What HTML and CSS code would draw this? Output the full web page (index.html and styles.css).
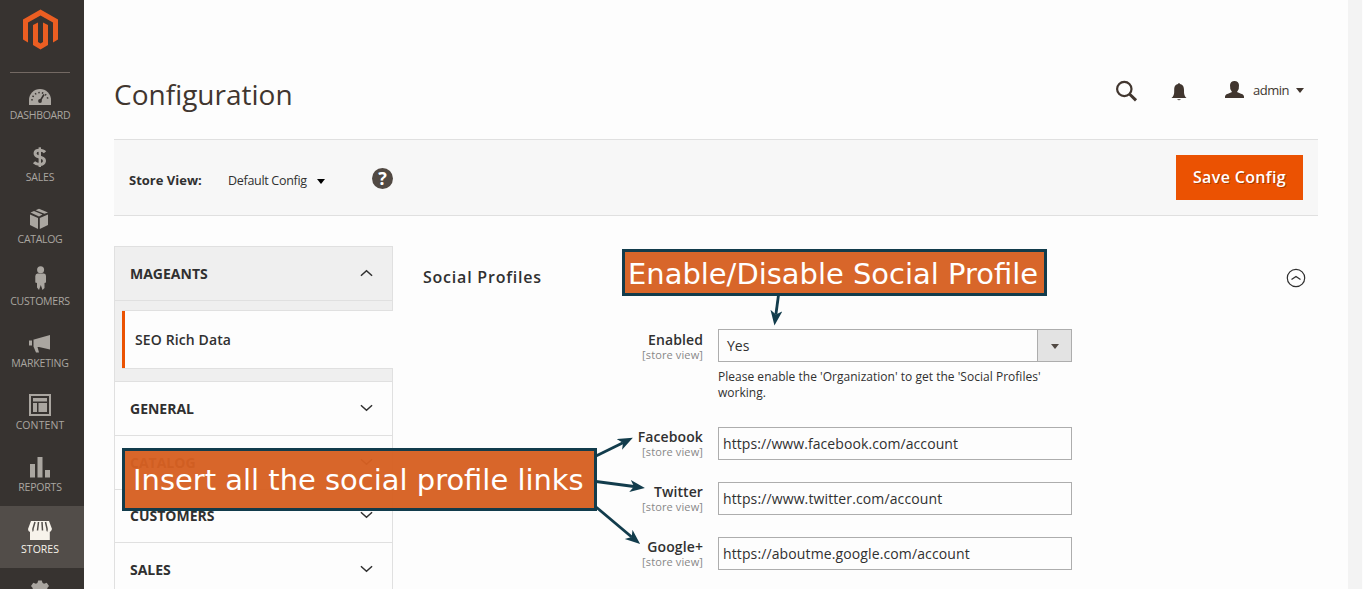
FILE: index.html
```html
<!DOCTYPE html>
<html lang="en">
<head>
<meta charset="utf-8">
<title>Configuration</title>
<link rel="stylesheet" href="styles.css">
</head>
<body>
<div class="app">
  <nav class="menu">
    <div class="logo">
      <svg width="84" height="72" viewBox="0 0 84 72" fill="#eb5e22"><path d="M40.5 9.500 58 19.500V39.500L53 42.500V22.500L40.500 15.500 28 22.500V42.500L23 39.500V19.500Z"/><path d="M33 25 38 22.500V42L40.500 43.500 43 42V22.500L48 25V45L40.500 49.500 33 45Z"/></svg>
    </div>
    <a class="item first"><svg width="84" height="36" viewBox="0 0 84 36"><path d="M29 33V28a11 11 0 0 1 22 0v5Z"/><g fill="none" stroke="#373330"><path stroke-width="1.600" stroke-dasharray="1.400 2.200" d="M32 28.500a8 8 0 0 1 16 0"/><path stroke-width="1.600" d="m40 29 4-6.500"/></g><circle cx="40" cy="29" r="1.900" fill="#373330"/></svg><span class="l-dash">DASHBOARD</span></a>
    <a class="item"><svg width="84" height="36" viewBox="0 0 84 36"><path fill="none" stroke="#aaa6a0" stroke-width="3" d="M45 18.300C43.500 16.500 41.500 16.300 39.500 16.300 33.500 16.300 34 21.700 38.500 22.700L41 23.400C46.500 25 45 30.500 40 30.500 37.500 30.500 35.500 29.800 34 28.200"/><path fill="none" stroke="#aaa6a0" stroke-width="2.400" d="M39.800 13.300V33"/></svg><span class="l-sales">SALES</span></a>
    <a class="item"><svg width="84" height="36" viewBox="0 0 84 36"><path d="M30 18.500 38 22V33L30 29ZM48 18.500 39.800 22V33L48 29ZM30.500 16.500 34 15 42.500 18.500 39 20.500ZM35.500 14.300 39 12.800 48 16.500 44.500 17.800Z"/></svg><span class="l-cat">CATALOG</span></a>
    <a class="item"><svg width="84" height="36" viewBox="0 0 84 36"><circle cx="40.600" cy="11.700" r="3.500"/><path d="M37.500 15.500H44Q46 15.500 46 18V24.500L44.500 25V30L42.500 32 40.800 27 39 32 37 29.500V25L35.300 24.500V18Q35.500 15.500 37.500 15.500Z"/></svg><span class="l-cust">CUSTOMERS</span></a>
    <a class="item"><svg width="84" height="36" viewBox="0 0 84 36"><path d="M34 19.500 50 15V29.500L39 27 37.500 27 39 32.500H36L33.500 26.500V19.500ZM29 20.500h3v5h-3Z"/></svg><span class="l-mark">MARKETING</span></a>
    <a class="item"><svg width="84" height="36" viewBox="0 0 84 36"><path fill-rule="evenodd" d="M29 12H51V34H29ZM31 14V32H49V14ZM33 16H47V19.500H33ZM33 21H37V30H33ZM38.500 21H47V30H38.500Z"/></svg><span class="l-cont">CONTENT</span></a>
    <a class="item"><svg width="84" height="36" viewBox="0 0 84 36"><path d="M30 20h5v13.500h-5ZM37.500 13h5v20.500h-5ZM45 26h5v7.500h-5Z"/></svg><span class="l-rep">REPORTS</span></a>
    <a class="item active"><svg width="84" height="36" viewBox="0 0 84 36"><path d="M31 15H49L52 23Q51 26 49.800 26V34H30V26Q28 25.500 28 23Z"/><path fill="none" stroke="#524d49" stroke-width="1.500" d="M35 16 33 22.500Q33 25 32.500 25M38.500 16 37.500 24.500M42 16 42.500 24.500M45.500 16 47 22.500Q47 25 47.500 25"/></svg><span class="l-store">STORES</span></a>
    <a class="item"><svg width="84" height="36" viewBox="0 0 84 36"><path fill-rule="evenodd" d="M38.200 12.500h3.600l.8 2.500 1.500.7 2.600-.9 2.300 3.200-1.700 2v8H32.700v-8l-1.700-2 2.300-3.200 2.600.9 1.500-.7ZM36 21.500h8v3h-8Z"/></svg></a>
  </nav>
  <main class="page">
    <header class="top">
      <h1>Configuration</h1>
      <div class="tools">
        <svg class="t-icon" width="153" height="40" viewBox="0 0 153 40" fill="#41362f"><circle cx="24.300" cy="19" r="7.200" fill="none" stroke="#41362f" stroke-width="2.200"/><path stroke="#41362f" stroke-width="3" d="m29.500 24 6.500 6.300"/><path d="M71.500 28Q74.500 26 74.200 20C74.200 15.500 76 14.500 78 14Q79 12.200 80 14C82 14.500 84 15.500 84 20Q83.700 26 86.500 28ZM77 29.200h4Q79 31.200 77 29.200ZM125 28Q124.500 24.500 128 23.700L132 22Q129.500 19 130 15 130.500 11 134.500 11T139 15Q139.500 19 137 22L141 23.700Q144.500 24.500 144 28Z"/></svg>
        <span class="user">admin</span>
        <i class="caret brown"></i>
      </div>
    </header>
    <section class="toolbar">
      <b class="sv">Store View:</b><span class="scope">Default Config</span><i class="caret"></i>
      <span class="help">?</span>
      <button class="save">Save Config</button>
    </section>
    <div class="columns">
      <aside class="tabs">
        <div class="tab open"><span class="n-mage">MAGEANTS</span><svg width="14" height="8" viewBox="0 0 14 8"><path d="m1 7 6-5.500L13 7"/></svg></div>
        <div class="sub"><div class="sub-item"><span>SEO Rich Data</span></div></div>
        <div class="tab"><span class="n-gen">GENERAL</span><svg width="14" height="8" viewBox="0 0 14 8"><path d="m1 1 6 5.500L13 1"/></svg></div>
        <div class="tab"><span class="n-cat">CATALOG</span><svg width="14" height="8" viewBox="0 0 14 8"><path d="m1 1 6 5.500L13 1"/></svg></div>
        <div class="tab short"><span class="n-cust">CUSTOMERS</span><svg width="14" height="8" viewBox="0 0 14 8"><path d="m1 1 6 5.500L13 1"/></svg></div>
        <div class="tab"><span class="n-sal">SALES</span><svg width="14" height="8" viewBox="0 0 14 8"><path d="m1 1 6 5.500L13 1"/></svg></div>
      </aside>
      <section class="form">
        <div class="form-head"><h2>Social Profiles</h2><svg width="20" height="20" viewBox="0 0 20 20" fill="none" stroke="#303030"><circle cx="10" cy="10" r="8.700" stroke-width="1.200"/><path stroke-width="1.400" d="m5.500 11.500 4.500-3 4.500 3"/></svg></div>
        <div class="field sel">
          <div class="label"><b class="f-en">Enabled</b><small>[store view]</small></div>
          <div class="control"><div class="select"><span>Yes</span><div class="drop"><i class="caret olive"></i></div></div>
          <p class="note">Please enable the 'Organization' to get the 'Social Profiles'<br>working.</p></div>
        </div>
        <div class="field"><div class="label"><b class="f-fb">Facebook</b><small>[store view]</small></div><div class="input"><span class="u-fb">https://www.facebook.com/account</span></div></div>
        <div class="field"><div class="label"><b class="f-tw">Twitter</b><small>[store view]</small></div><div class="input"><span class="u-tw">https://www.twitter.com/account</span></div></div>
        <div class="field"><div class="label"><b class="f-go">Google+</b><small>[store view]</small></div><div class="input"><span class="u-go">https://aboutme.google.com/account</span></div></div>
      </section>
    </div>
  </main>
  <div class="gutter"></div>
</div>
<svg class="arrows" width="1363" height="589" viewBox="0 0 1363 589">
  <defs><marker id="head" markerUnits="userSpaceOnUse" markerWidth="18" markerHeight="14" refX="4" refY="6" orient="auto"><path d="M0 0 15 6 0 12 4 6Z" fill="#123c4c"/></marker></defs>
  <g stroke="#123c4c" stroke-width="2.800"><path marker-end="url(#head)" d="M778.500 295 775.900 314.500"/><path marker-end="url(#head)" d="M596 456 623 442.700"/><path marker-end="url(#head)" d="M596 481.500 634 486.500"/><path marker-end="url(#head)" d="M596 507 631.700 537"/></g>
</svg>
<div class="callout c-enable"><span>Enable/Disable Social Profile</span></div>
<div class="callout c-links"><span>Insert all the social profile links</span></div>
</body>
</html>
```
FILE: styles.css
```css
* { box-sizing: border-box; }
body { margin: 0; width: 1363px; height: 589px; overflow: hidden; position: relative; background: #fdfdfd; color: #303030; font-family: "Open Sans", "Noto Sans", sans-serif; font-size: 14px; }
.app { display: flex; height: 589px; overflow: hidden; }
.app span, .app b { white-space: nowrap; }
.menu { width: 84px; flex: none; background: #373330; }
.logo, .logo svg { display: block; height: 72px; }
.item { display: flex; flex-direction: column; height: 62px; align-items: center; color: #aaa6a0; font-size: 10.5px; line-height: 14px; position: relative; }
.item svg { fill: #aaa6a0; flex: none; }
.item span { margin-right: 4px; letter-spacing: -.2px; }
.item .l-dash { letter-spacing: -.3px; }
.item .l-cat { letter-spacing: -.3px; }
.item .l-cont { letter-spacing: .1px; }
.item .l-store { letter-spacing: 0; }
.item.first::before { content: ""; position: absolute; left: 10px; top: 0; width: 60px; height: 1px; background: #736963; }
.item.active { background: #524d49; color: #f7f3eb; }
.item.active svg { fill: #f7f3eb; }
.page { width: 1264px; flex: none; padding: 0 30px; }
.top { height: 139px; display: flex; justify-content: space-between; }
h1 { margin: 75px 0 0; font-size: 28px; font-weight: 400; line-height: 38px; color: #41362f; }
.tools { display: flex; align-items: center; height: 40px; margin-top: 70px; width: 218px; }
.t-icon { width: 153px; height: 40px; flex: none; }
.user { font-size: 13px; color: #41362f; width: 36px; letter-spacing: -.5px; }
.caret { width: 0; height: 0; border: 4px solid transparent; border-top: 5px solid #000; border-bottom: 0; }
.caret.brown { border-top-color: #41362f; margin-left: 7px; }
.caret.olive { border-top-color: #514943; margin-top: 1px; }
.toolbar { height: 77px; background: #f7f7f7; border: solid #e0e0e0; border-width: 1px 0; display: flex; align-items: center; padding: 0 15px; }
.sv { width: 99px; font-size: 13px; padding-top: 4px; }
.scope { width: 89px; font-size: 12.500px; padding-top: 6px; letter-spacing: -.3px; }
.toolbar .caret { margin-top: 7px; }
.help { width: 21px; height: 21px; border-radius: 50%; background: #514943; color: #fff; font-size: 18px; font-weight: 700; line-height: 21px; text-align: center; margin-left: 47px; margin-top: 2px; }
.save { margin-left: auto; width: 127px; height: 45px; border: 0; padding: 0; background: #eb5202; color: #fff; font: 600 16px/45px "Open Sans", sans-serif; letter-spacing: .35px; text-shadow: 1px 1px 0 rgba(0,0,0,.3); }
.columns { display: flex; padding-top: 30px; }
.tabs { width: 279px; flex: none; border: 1px solid #e0e0e0; border-bottom: 0; }
.tab { height: 54px; border-bottom: 1px solid #e0e0e0; display: flex; align-items: center; justify-content: space-between; padding: 0 19px 0 15px; font-weight: 700; }
.tab.short { height: 53px; padding-bottom: 1px; }
.tab.open { background: #efefef; }
.tab svg { fill: none; stroke: #303030; stroke-width: 1.600; width: 13px; margin-top: -1px; }
.sub { height: 81px; background: #efefef; border-bottom: 1px solid #e0e0e0; padding: 9px 0 0 7px; }
.sub-item { width: 271px; height: 59px; background: linear-gradient(#eb5202, #eb5202) 0 0 / 3px 100% no-repeat border-box #fdfdfd; border: solid #e0e0e0; border-width: 1px 0; display: flex; align-items: center; padding-left: 13px; font-weight: 600; letter-spacing: .12px; }
.form { flex: 1; padding-left: 30px; }
.form-head { height: 83px; display: flex; justify-content: space-between; padding: 20px 12px 0 0; }
h2 { margin: 0; font-size: 16px; line-height: 22px; font-weight: 600; letter-spacing: .78px; }
.form-head svg { margin-top: 2px; }
.field { display: flex; height: 55px; }
.field.sel { height: 98px; }
.label { width: 280px; margin-right: 15px; display: flex; flex-direction: column; align-items: flex-end; line-height: 16px; padding-top: 2px; }
.sel .label { padding-top: 3px; }
.label b { font-weight: 600; letter-spacing: .1px; }
.label small { font-size: 11px; line-height: 14px; color: #888; letter-spacing: .12px; }
.input, .select { width: 354px; height: 33px; border: 1px solid #adadad; background: #fdfdfd; display: flex; align-items: center; padding-left: 4px; }
.u-fb { letter-spacing: .08px; }
.u-tw, .u-go { letter-spacing: .12px; }
.select { padding-left: 8px; justify-content: space-between; }
.drop { width: 34px; height: 31px; border-left: 1px solid #adadad; background: #e3e3e3; display: flex; align-items: center; justify-content: center; }
.note { margin: 7px 0 0; font-size: 12px; line-height: 16px; white-space: nowrap; letter-spacing: .02px; }
.gutter { width: 14px; background: #f3f3f3; }
.arrows { position: absolute; left: 0; top: 0; }
.callout { position: absolute; border: 3px solid #123c4c; background: rgba(214,96,33,.96); background-clip: padding-box; color: #fff; font-family: "DejaVu Sans", sans-serif; font-size: 28.960px; white-space: nowrap; display: flex; align-items: center; }
.c-enable { left: 622px; top: 249px; width: 425px; height: 47px; padding: 3px 0 0 3px; }
.c-links { left: 122px; top: 448px; width: 475px; height: 63px; padding: 0 0 0 8px; }
```
